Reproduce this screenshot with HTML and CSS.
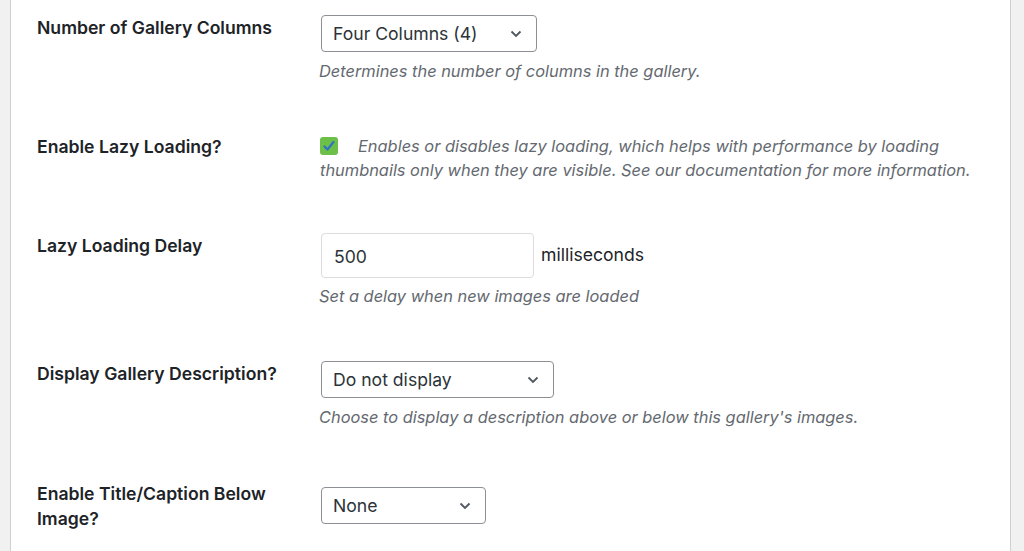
FILE: index.html
```html
<!DOCTYPE html>
<html>
<head>
<meta charset="utf-8">
<link rel="stylesheet" href="styles.css">
</head>
<body>
<div class="panel">
  <div class="row row1">
    <div class="label">Number of Gallery Columns</div>
    <div class="field">
      <div class="select w1"><span>Four Columns (4)</span><svg class="chev" viewBox="0 0 12 8"><path d="M1.5 1.5 L6 6 L10.5 1.5" fill="none" stroke="#50575e" stroke-width="1.8"/></svg></div>
      <p class="desc">Determines the number of columns in the gallery.</p>
    </div>
  </div>
  <div class="row row2">
    <div class="label">Enable Lazy Loading?</div>
    <div class="field">
      <p class="desc inline"><span class="check"><svg viewBox="0 0 18 18"><path d="M4.5 9.5 L7.5 12.5 L13.5 5" fill="none" stroke="#2f72c4" stroke-width="2.2" stroke-linecap="round" stroke-linejoin="round"/></svg></span>Enables or disables lazy loading, which helps with performance by loading thumbnails only when they are visible. See our documentation for more information.</p>
    </div>
  </div>
  <div class="row row3">
    <div class="label">Lazy Loading Delay</div>
    <div class="field">
      <div class="inputline"><div class="input">500</div><span class="unit">milliseconds</span></div>
      <p class="desc">Set a delay when new images are loaded</p>
    </div>
  </div>
  <div class="row row4">
    <div class="label">Display Gallery Description?</div>
    <div class="field">
      <div class="select w4"><span>Do not display</span><svg class="chev" viewBox="0 0 12 8"><path d="M1.5 1.5 L6 6 L10.5 1.5" fill="none" stroke="#50575e" stroke-width="1.8"/></svg></div>
      <p class="desc">Choose to display a description above or below this gallery's images.</p>
    </div>
  </div>
  <div class="row row5">
    <div class="label">Enable Title/Caption Below Image?</div>
    <div class="field">
      <div class="select w5"><span>None</span><svg class="chev" viewBox="0 0 12 8"><path d="M1.5 1.5 L6 6 L10.5 1.5" fill="none" stroke="#50575e" stroke-width="1.8"/></svg></div>
    </div>
  </div>
</div>
</body>
</html>
```
FILE: styles.css
```css
html, body {
  margin: 0;
  padding: 0;
  background: #f1f1f1;
  font-family: Inter, "Liberation Sans", Arial, sans-serif;
  height: 551px;
  overflow: hidden;
}
.panel {
  margin-left: 10px;
  width: 1001px;
  height: 551px;
  background: #fff;
  border-left: 1px solid #d0d0d2;
  border-right: 1px solid #d0d0d2;
  padding-left: 26px;
  box-sizing: border-box;
}
.row {
  display: grid;
  grid-template-columns: 284px 680px;
  align-items: start;
}
.label {
  font-size: 17.6px;
  font-weight: 600;
  color: #1d2327;
  line-height: 26px;
  width: 250px;
}
.row1 { padding-top: 15px; }
.row2 { padding-top: 51px; }
.row3 { padding-top: 51px; }
.row4 { padding-top: 53px; }
.row5 { padding-top: 52px; }
.row5 .field { padding-top: 6px; }
.row5 .label { line-height: 25px; }
.select {
  box-sizing: border-box;
  height: 37px;
  border: 1px solid #8c8f94;
  border-radius: 4px;
  display: flex;
  align-items: center;
  justify-content: space-between;
  padding: 0 14px 0 11px;
  font-size: 17.6px;
  color: #2c3338;
  background: #fff;
}
.w1 { width: 216px; }
.w4 { width: 233px; }
.w5 { width: 165px; }
.chev { width: 12px; height: 8px; }
.desc {
  margin: 7px 0 0 -2px;
  font-style: italic;
  font-size: 16.4px;
  line-height: 24px;
  color: #646970;
}
.desc.inline {
  margin: 0 0 0 -1px;
  width: 665px;
}
.check {
  display: inline-block;
  vertical-align: -3px;
  width: 18px;
  height: 18px;
  border-radius: 3px;
  background: #6cc04a;
  margin-right: 20px;
}
.check svg { width: 18px; height: 18px; display: block; }
.inputline { display: flex; align-items: center; }
.input {
  box-sizing: border-box;
  width: 213px;
  height: 45px;
  border: 1px solid #dcdcde;
  border-radius: 4px;
  font-size: 17.6px;
  color: #2c3338;
  padding: 0 12px;
  display: flex;
  align-items: center;
  padding-top: 2px;
}
.unit {
  font-size: 17.6px;
  color: #1d2327;
  margin-left: 7px;
  margin-top: -3px;
}
.row3 .desc { margin-top: 6px; }
```
